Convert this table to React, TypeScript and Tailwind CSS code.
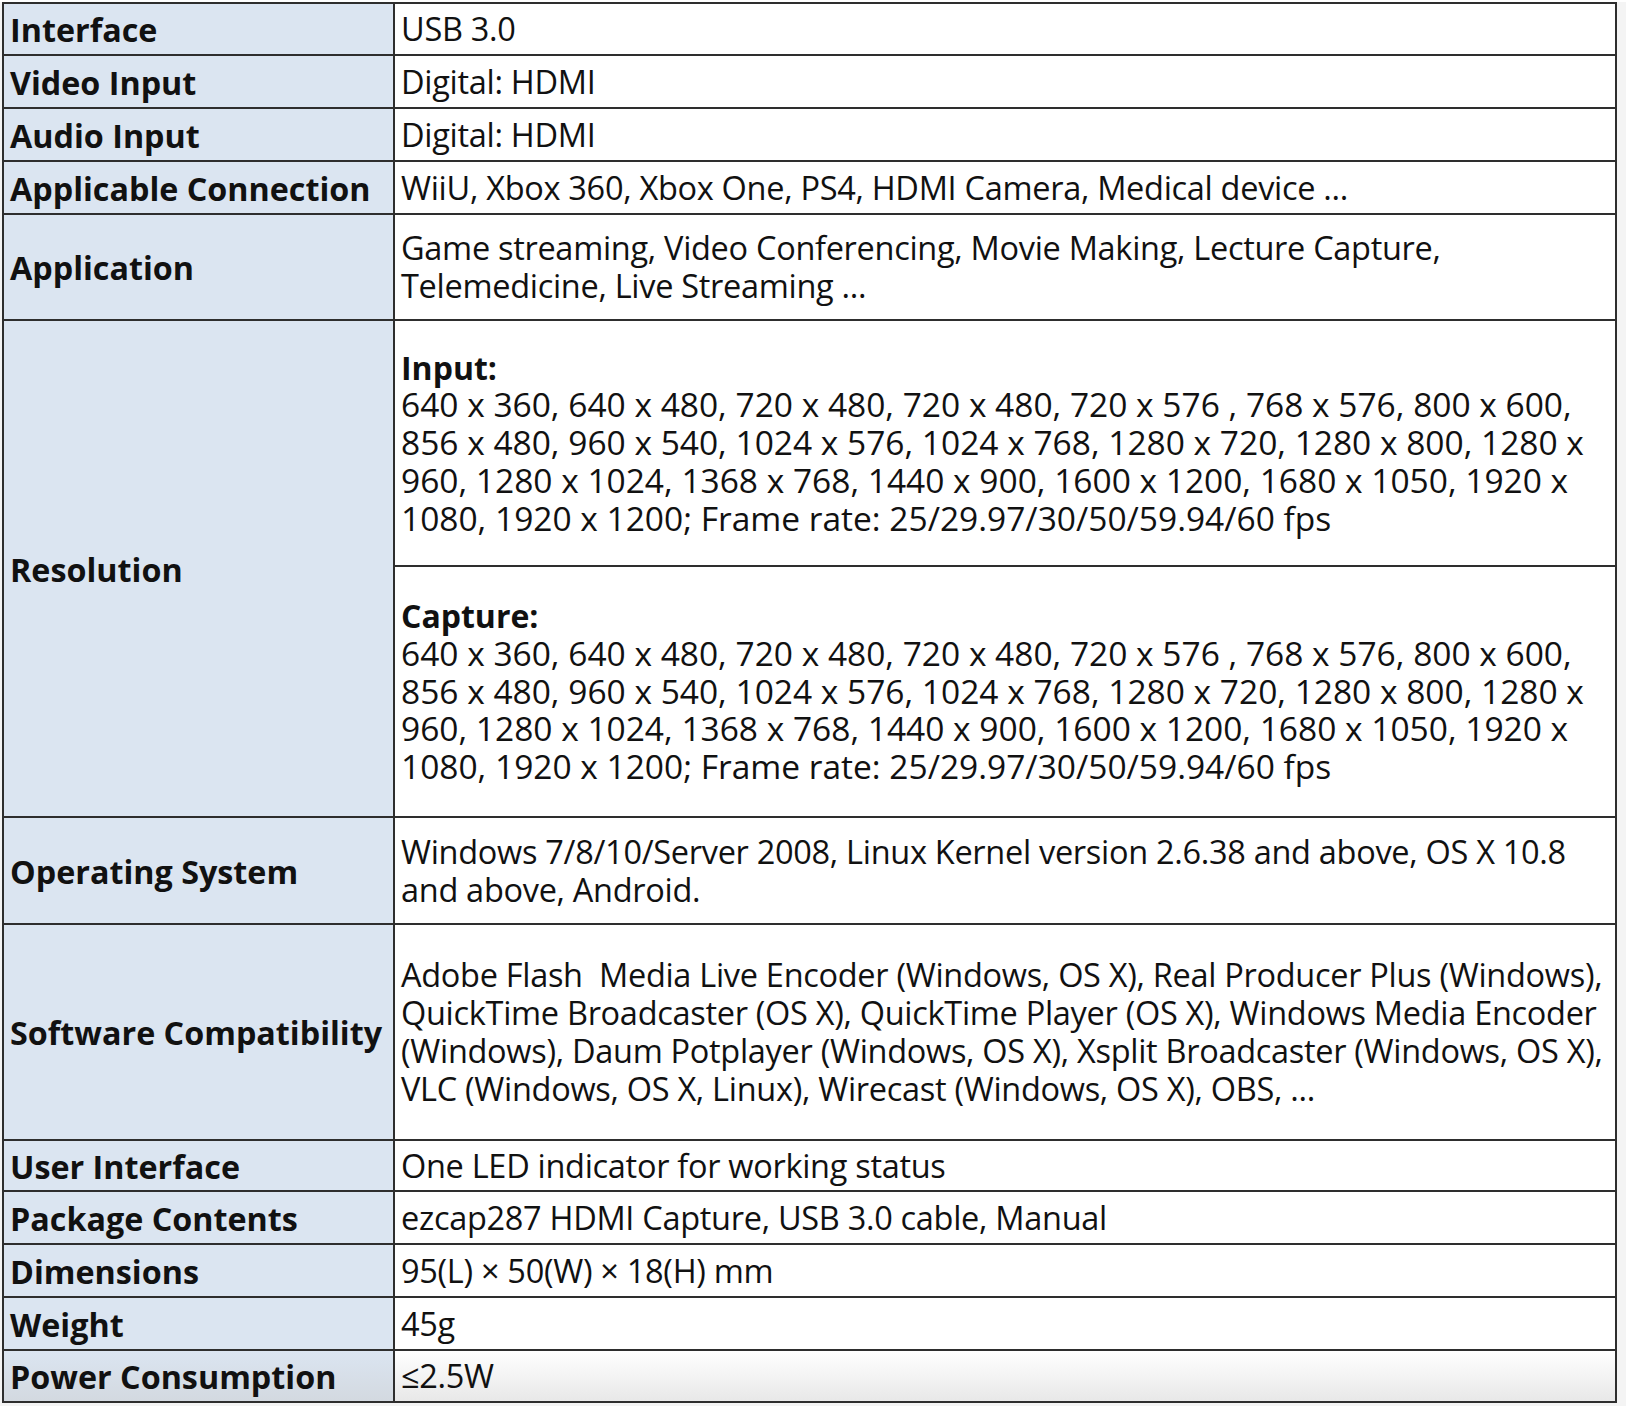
import React from "react";

type Row = { label: string; h: string; value: React.ReactNode };

const F = { fontFamily: '"Open Sans", "Noto Sans", sans-serif' };

const input = [
  "640 x 360, 640 x 480, 720 x 480, 720 x 480, 720 x 576 , 768 x 576, 800 x 600,",
  "856 x 480, 960 x 540, 1024 x 576, 1024 x 768, 1280 x 720, 1280 x 800, 1280 x",
  "960, 1280 x 1024, 1368 x 768, 1440 x 900, 1600 x 1200, 1680 x 1050, 1920 x",
  "1080, 1920 x 1200; Frame rate: 25/29.97/30/50/59.94/60 fps",
];

function Lines({ lines }: { lines: string[] }) {
  return (
    <>
      {lines.map((l, i) => (
        <div key={i} className="whitespace-pre">
          {l}
        </div>
      ))}
    </>
  );
}

const labelCls =
  "w-[391px] shrink-0 bg-[#dbe5f1] border-r-2 border-[#2e2e2e] flex items-center pl-[6px] font-bold text-[32.3px] leading-[38px] whitespace-nowrap";
const valueCls =
  "flex-1 flex flex-col justify-center pl-[6px] text-[32.5px] leading-[37.8px] tracking-[-0.3px]";

export default function App() {
  const rows: Row[] = [
    { label: "Interface", h: "h-[52px]", value: <Lines lines={["USB 3.0"]} /> },
    { label: "Video Input", h: "h-[53px]", value: <Lines lines={["Digital: HDMI"]} /> },
    { label: "Audio Input", h: "h-[53px]", value: <Lines lines={["Digital: HDMI"]} /> },
    {
      label: "Applicable Connection",
      h: "h-[53px]",
      value: <Lines lines={["WiiU, Xbox 360, Xbox One, PS4, HDMI Camera, Medical device ..."]} />,
    },
    {
      label: "Application",
      h: "h-[106px]",
      value: (
        <Lines
          lines={[
            "Game streaming, Video Conferencing, Movie Making, Lecture Capture,",
            "Telemedicine, Live Streaming ...",
          ]}
        />
      ),
    },
  ];
  const rows2: Row[] = [
    {
      label: "Operating System",
      h: "h-[107px]",
      value: (
        <Lines
          lines={[
            "Windows 7/8/10/Server 2008, Linux Kernel version 2.6.38 and above, OS X 10.8",
            "and above, Android.",
          ]}
        />
      ),
    },
    {
      label: "Software Compatibility",
      h: "h-[216px]",
      value: (
        <Lines
          lines={[
            "Adobe Flash  Media Live Encoder (Windows, OS X), Real Producer Plus (Windows),",
            "QuickTime Broadcaster (OS X), QuickTime Player (OS X), Windows Media Encoder",
            "(Windows), Daum Potplayer (Windows, OS X), Xsplit Broadcaster (Windows, OS X),",
            "VLC (Windows, OS X, Linux), Wirecast (Windows, OS X), OBS, ...",
          ]}
        />
      ),
    },
    { label: "User Interface", h: "h-[51px]", value: <Lines lines={["One LED indicator for working status"]} /> },
    {
      label: "Package Contents",
      h: "h-[53px]",
      value: <Lines lines={["ezcap287 HDMI Capture, USB 3.0 cable, Manual"]} />,
    },
    { label: "Dimensions", h: "h-[53px]", value: <Lines lines={["95(L) × 50(W) × 18(H) mm"]} /> },
    { label: "Weight", h: "h-[53px]", value: <Lines lines={["45g"]} /> },
  ];

  const renderRow = (r: Row) => (
    <div key={r.label} className={`flex ${r.h} border-b-2 border-[#2e2e2e]`}>
      <div className={labelCls}>{r.label}</div>
      <div className={valueCls}>{r.value}</div>
    </div>
  );

  return (
    <div className="w-[1626px] h-[1406px] bg-[#f4f4f4] text-[#111]" style={F}>
      <div className="ml-[2px] mt-[2px] w-[1615px] border-2 border-[#2e2e2e] bg-white">
        {rows.map(renderRow)}
        <div className="flex h-[497px] border-b-2 border-[#2e2e2e]">
          <div className={labelCls}>Resolution</div>
          <div className="flex-1 flex flex-col text-[33.5px] leading-[37.8px]">
            <div className="h-[246px] border-b-2 border-[#2e2e2e] flex flex-col justify-center pl-[6px]">
              <div className="font-bold text-[32px]">Input:</div>
              <Lines lines={input} />
            </div>
            <div className="flex-1 flex flex-col justify-center pl-[6px]">
              <div className="font-bold text-[32px]">Capture:</div>
              <Lines lines={input} />
            </div>
          </div>
        </div>
        {rows2.map(renderRow)}
        <div className="flex h-[50px] bg-gradient-to-b from-white to-[#e8e8e8]">
          <div className="w-[391px] shrink-0 bg-gradient-to-b from-[#dbe5f1] to-[#d3d9e0] border-r-2 border-[#2e2e2e] flex items-center pl-[6px] font-bold text-[32.3px] leading-[38px] whitespace-nowrap">
            Power Consumption
          </div>
          <div className={valueCls}>≤2.5W</div>
        </div>
      </div>
    </div>
  );
}
